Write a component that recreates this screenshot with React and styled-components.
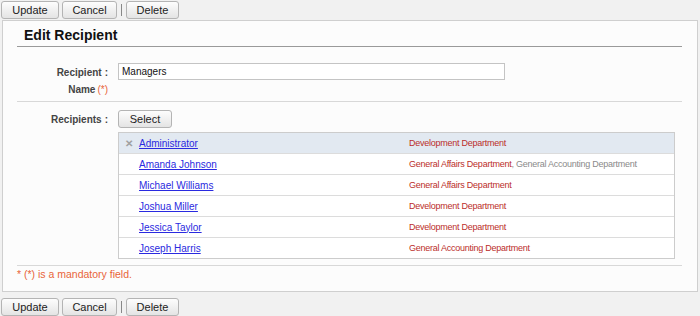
import styled, { createGlobalStyle } from 'styled-components';

const GlobalStyle = createGlobalStyle`
  body {
    margin: 0;
    background: #f1f1f1;
    font-family: "Liberation Sans", Arial, sans-serif;
    color: #222;
  }
`;

const Toolbar = styled.div`
  display: flex;
  align-items: center;
  gap: 3px;
  padding: ${p => (p.$bottom ? '6px 1px 1px' : '1px 1px 1px')};
`;

const Button = styled.button`
  height: 18px;
  width: ${p => p.$w}px;
  padding: 0;
  border: 1px solid #b4b4b4;
  border-radius: 3px;
  background: linear-gradient(#fdfdfd, #e4e4e4);
  font-family: "Liberation Sans", Arial, sans-serif;
  font-size: 11px;
  color: #222;
  line-height: 16px;
`;

const Sep = styled.span`
  width: 1px;
  height: 12px;
  background: #888;
  margin: 0 1px;
`;

const Panel = styled.div`
  margin: 0 2px;
  border: 1px solid #cfcfcf;
  background: #fcfcfc;
  padding: 0 15px 9px 14px;
`;

const Heading = styled.h2`
  margin: 0;
  padding: 4px 0 1px 7px;
  font-size: 14px;
  line-height: 20px;
  font-weight: bold;
  color: #111;
  border-bottom: 1px solid #9a9a9a;
`;

const Row = styled.div`
  display: flex;
  align-items: flex-start;
  gap: 10px;
  padding: ${p => p.$pad};
  border-bottom: 1px solid #d8d8d8;
`;

const Label = styled.div`
  width: 91px;
  flex: none;
  text-align: right;
  font-size: 10px;
  font-weight: bold;
  color: #444;
  line-height: 17px;
  padding-top: 1px;
`;

const Colon = styled.span`
  margin-left: 3px;
`;

const Req = styled.span`
  color: #e8643a;
  font-weight: normal;
  margin-left: 2px;
`;

const Field = styled.div`
  flex: 1;
  display: flex;
  flex-direction: column;
  align-items: flex-start;
`;

const TextInput = styled.input`
  box-sizing: border-box;
  width: 387px;
  height: 17px;
  margin: 0;
  padding: 0 3px;
  border: 1px solid #c4c4c4;
  background: #fff;
  font-family: "Liberation Sans", Arial, sans-serif;
  font-size: 10px;
  color: #111;
`;

const Table = styled.div`
  width: 557px;
  margin-top: 4px;
  border: 1px solid #cccccc;
  background: #fff;
  box-sizing: border-box;
`;

const TRow = styled.div`
  display: flex;
  align-items: center;
  height: 20px;
  background: ${p => (p.$sel ? '#e2e9f1' : '#fff')};
  border-top: ${p => (p.$first ? 'none' : '1px solid #dcdcdc')};
`;

const NameCell = styled.div`
  width: 290px;
  flex: none;
  display: flex;
  align-items: center;
`;

const Remove = styled.span`
  width: 20px;
  text-align: center;
  font-size: 10px;
  font-weight: bold;
  color: #a0a0a0;
`;

const NameLink = styled.a`
  color: #2a2ae0;
  font-size: 10px;
  text-decoration: underline;
  cursor: pointer;
`;

const DeptCell = styled.div`
  font-size: 9px;
  letter-spacing: -0.25px;
  color: #bb2e2a;
`;

const Other = styled.span`
  color: #8a8a8a;
`;

const Note = styled.div`
  font-size: 10.5px;
  line-height: 16px;
  color: #e8643a;
`;

const members = [
  { name: 'Administrator', depts: ['Development Department'], sel: true },
  { name: 'Amanda Johnson', depts: ['General Affairs Department', 'General Accounting Department'] },
  { name: 'Michael Williams', depts: ['General Affairs Department'] },
  { name: 'Joshua Miller', depts: ['Development Department'] },
  { name: 'Jessica Taylor', depts: ['Development Department'] },
  { name: 'Joseph Harris', depts: ['General Accounting Department'] },
];

function Actions({ bottom }) {
  return (
    <Toolbar $bottom={bottom}>
      <Button $w={58}>Update</Button>
      <Button $w={55}>Cancel</Button>
      <Sep />
      <Button $w={53}>Delete</Button>
    </Toolbar>
  );
}

export default function App() {
  return (
    <>
      <GlobalStyle />
      <Actions />
      <Panel>
        <Heading>Edit Recipient</Heading>
        <Row $pad="16px 0 3px">
          <Label>
            Recipient<Colon>:</Colon>
            <br />
            Name<Req>(*)</Req>
          </Label>
          <Field>
            <TextInput defaultValue="Managers" />
          </Field>
        </Row>
        <Row $pad="8px 0 6px">
          <Label>
            Recipients<Colon>:</Colon>
          </Label>
          <Field>
            <Button $w={54}>Select</Button>
            <Table>
              {members.map((m, i) => (
                <TRow key={m.name} $sel={m.sel} $first={i === 0}>
                  <NameCell>
                    <Remove>{m.sel ? '✕' : ''}</Remove>
                    <NameLink>{m.name}</NameLink>
                  </NameCell>
                  <DeptCell>
                    {m.depts[0]}
                    {m.depts[1] && <Other>, {m.depts[1]}</Other>}
                  </DeptCell>
                </TRow>
              ))}
            </Table>
          </Field>
        </Row>
        <Note>* (*) is a mandatory field.</Note>
      </Panel>
      <Actions bottom />
    </>
  );
}
